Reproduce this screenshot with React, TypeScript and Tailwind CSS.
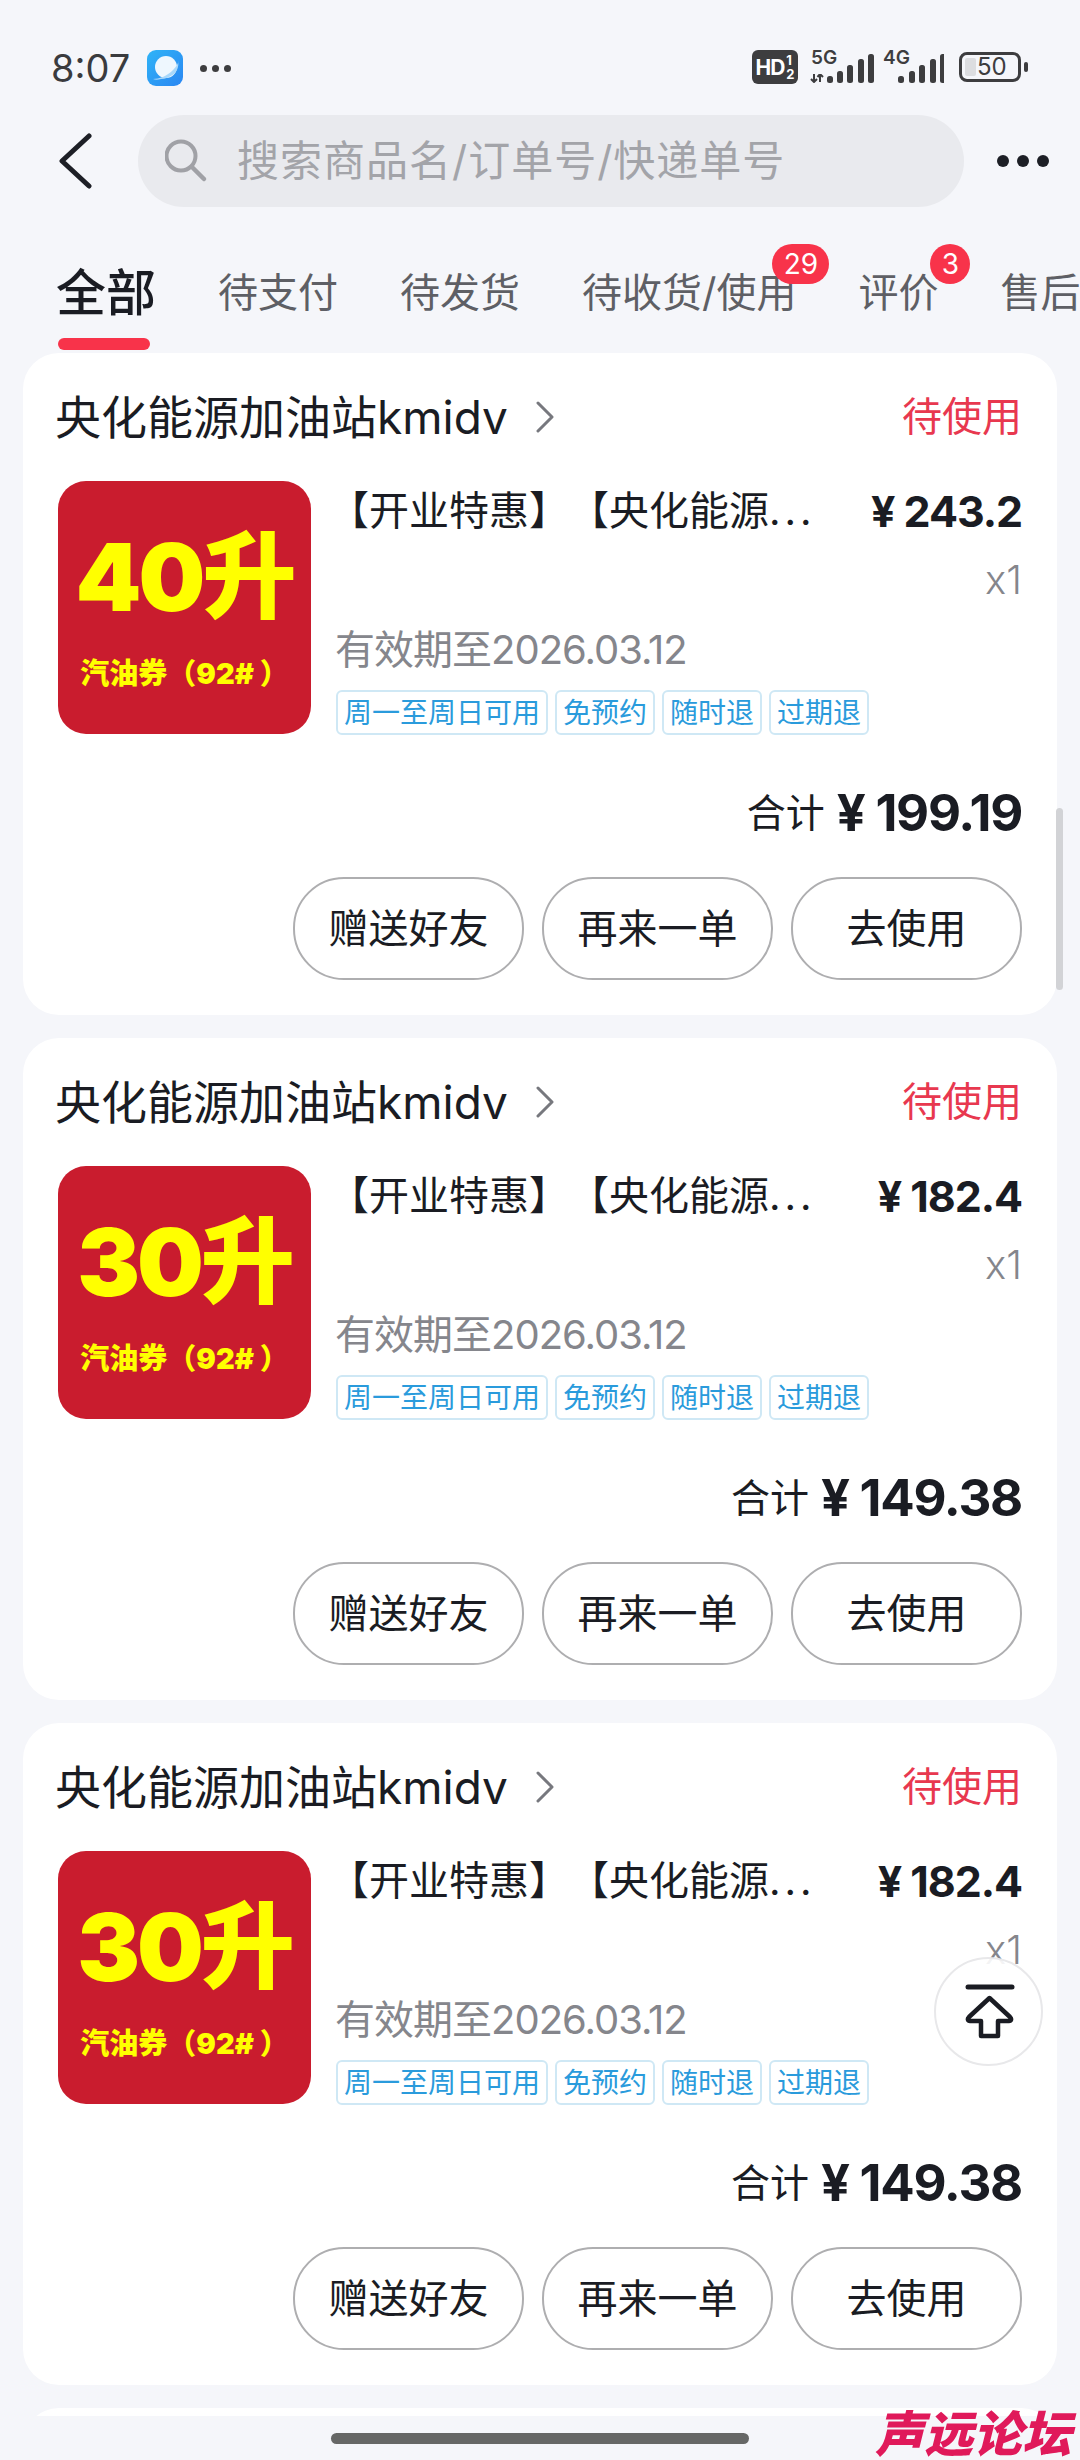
const font = { fontFamily: '"Inter", "Noto Sans CJK SC", sans-serif' }

const tabs = [
  { name: "全部", active: true },
  { name: "待支付" },
  { name: "待发货" },
  { name: "待收货/使用", badge: "29" },
  { name: "评价", badge: "3" },
  { name: "售后" },
]

const orders = [
  { liters: "40升", price: "243.2", total: "199.19" },
  { liters: "30升", price: "182.4", total: "149.38" },
  { liters: "30升", price: "182.4", total: "149.38" },
]

const tags = ["周一至周日可用", "免预约", "随时退", "过期退"]
const actions = ["赠送好友", "再来一单", "去使用"]

function Signal({ bars }: { bars: { x: number; top: number }[] }) {
  return (
    <svg width="50" height="31" viewBox="0 0 50 31" className="block">
      {bars.map((b) => (
        <rect key={b.x} x={b.x} y={b.top} width="6" height={30 - b.top} rx="2.5" fill="#3d3d3f" />
      ))}
    </svg>
  )
}

function StatusBar() {
  return (
    <div className="flex h-[115px] shrink-0 items-start justify-between pl-[51px] pr-[51px] pt-[50px]">
      <div className="flex h-9 items-center">
        <span className="text-[38px] leading-none text-[#3a3b3e]">8:07</span>
        <svg width="36" height="36" viewBox="0 0 36 36" className="ml-[17px]">
          <defs>
            <linearGradient id="appBlue" x1="0" y1="0" x2="1" y2="1">
              <stop offset="0" stopColor="#2fb4f7" />
              <stop offset="1" stopColor="#2a86f2" />
            </linearGradient>
          </defs>
          <rect width="36" height="36" rx="9" fill="url(#appBlue)" />
          <circle cx="19" cy="17" r="11" fill="#eef7fe" />
          <path d="M6 29c6 0 14-3 19-8s7-9 6-10c1 4 0 9-4 13-4 3-9 5-13 5-3 1-6 1-8 0Z" fill="#a8d8fa" />
        </svg>
        <div className="ml-[17px] flex items-center gap-[5px]">
          <span className="size-[7px] rounded-full bg-[#3d3d3f]" />
          <span className="size-[7px] rounded-full bg-[#3d3d3f]" />
          <span className="size-[7px] rounded-full bg-[#3d3d3f]" />
        </div>
      </div>
      <div className="mr-[8px] flex h-9 items-start">
        <div className="flex h-[34px] w-[46px] items-center justify-center gap-[2px] rounded-[6px] bg-[#3d3d3f] text-white">
          <span className="text-[21px] font-bold leading-none tracking-tighter">HD</span>
          <span className="flex flex-col text-[13px] font-bold leading-[14px]">
            <span>1</span>
            <span>2</span>
          </span>
        </div>
        <div className="relative ml-[12px] h-[34px] w-[65px]">
          <span className="absolute left-[1px] top-[-1px] text-[19px] font-semibold leading-[18px] text-[#3d3d3f]">5G</span>
          <svg width="15" height="9" viewBox="0 0 15 9" className="absolute left-0 top-[24px]">
            <path d="M4 0v8M1 5l3 3 3-3M10 8V0M7.500 3 10 0l3 3" stroke="#3d3d3f" strokeWidth="2" fill="none" />
          </svg>
          <div className="absolute left-[14px] top-[3px]">
            <Signal bars={[{ x: 3, top: 23 }, { x: 13, top: 18 }, { x: 23, top: 12 }, { x: 34, top: 6 }, { x: 44, top: 1 }]} />
          </div>
        </div>
        <div className="relative ml-[7px] h-[34px] w-[64px]">
          <span className="absolute left-[1px] top-[-1px] text-[19px] font-semibold leading-[18px] text-[#3d3d3f]">4G</span>
          <div className="absolute left-[12px] top-[3px]">
            <Signal bars={[{ x: 4, top: 23 }, { x: 15, top: 18 }, { x: 25, top: 12 }, { x: 36, top: 6 }, { x: 46, top: 1 }]} />
          </div>
        </div>
        <div className="relative ml-[13px] mt-[2px] h-[30px] w-[62px] rounded-[8px] border-[3px] border-[#3d3d3f]">
          <div className="absolute bottom-[3px] left-[3px] top-[3px] w-[11px] rounded-[2px] bg-[#dcdde0]" />
          <span className="absolute left-[15px] top-0 text-[24px] leading-[24px] text-[#3d3d3f]">50</span>
          <div className="absolute right-[-10px] top-[7px] h-[10px] w-[4px] rounded-full bg-[#3d3d3f]" />
        </div>
      </div>
    </div>
  )
}

function SearchBar() {
  return (
    <div className="flex h-[92px] shrink-0 items-center pl-[58px] pr-[31px]">
      <svg width="34" height="56" viewBox="0 0 34 56" fill="none" className="shrink-0">
        <path d="M31 3 4 28l27 25" stroke="#1d1f26" strokeWidth="5" strokeLinecap="round" strokeLinejoin="round" />
      </svg>
      <div className="ml-[46px] flex h-[92px] w-[826px] items-center rounded-[46px] bg-[#e9eaee] pl-[27px]">
        <svg width="44" height="44" viewBox="0 0 44 44" fill="none" className="shrink-0">
          <circle cx="16" cy="17" r="14.500" stroke="#a0a1a6" strokeWidth="4" />
          <path d="M27 28l12 12" stroke="#a0a1a6" strokeWidth="4.500" strokeLinecap="round" />
        </svg>
        <span className="ml-[28px] text-[42px] leading-none tracking-[1px] text-[#a3a4a9]">搜索商品名/订单号/快递单号</span>
      </div>
      <div className="ml-[33px] flex items-center gap-[8px]">
        <span className="size-[12px] rounded-full bg-[#1d1f26]" />
        <span className="size-[12px] rounded-full bg-[#1d1f26]" />
        <span className="size-[12px] rounded-full bg-[#1d1f26]" />
      </div>
    </div>
  )
}

function Tabs() {
  return (
    <div className="flex h-[146px] shrink-0 gap-[62px] overflow-hidden pl-[56px] pt-[56px]">
      {tabs.map((t) => (
        <div key={t.name} className="relative shrink-0">
          <div className={t.active ? "h-[60px] text-[50px] font-medium leading-[60px] text-[#1a1c23]" : "h-[60px] text-[40px] leading-[60px] text-[#5e5f65]"}>
            {t.name}
          </div>
          {t.active && <div className="ml-[2px] mt-[15px] h-[12px] w-[92px] rounded-full bg-[#f8334a]" />}
          {t.badge && (
            <span
              className={
                t.badge.length > 1
                  ? "absolute right-[-33px] top-[-19px] flex h-[40px] w-[57px] items-center justify-center rounded-full bg-[#f8334a] text-[28px] text-white"
                  : "absolute right-[-32px] top-[-19px] flex size-[40px] items-center justify-center rounded-full bg-[#f8334a] text-[28px] text-white"
              }
            >
              {t.badge}
            </span>
          )}
        </div>
      ))}
    </div>
  )
}

function OrderCard({ liters, price, total }: { liters: string; price: string; total: string }) {
  return (
    <div className="h-[662px] shrink-0 rounded-[36px] bg-white px-[35px] pt-[34px]">
      <div className="flex h-[60px] items-center justify-between">
        <div className="flex items-center">
          <span className="ml-[-3px] text-[46px] leading-[60px] text-[#1a1c23]">央化能源加油站kmidv</span>
          <svg width="20" height="32" viewBox="0 0 20 32" fill="none" className="ml-[27px]">
            <path d="M3 2l14 14L3 30" stroke="#77787e" strokeWidth="3" strokeLinecap="round" strokeLinejoin="round" />
          </svg>
        </div>
        <span className="text-[40px] text-[#e8384f]">待使用</span>
      </div>
      <div className="mt-[34px] flex">
        <div className="flex size-[253px] shrink-0 flex-col items-center rounded-[28px] bg-[#c91c2e] text-[#ffff00]">
          <span className="mt-[41px] h-[110px] text-[94px] font-black leading-[110px] tracking-[-3px]">{liters}</span>
          <span className="mt-[25px] text-[29px] font-black leading-[34px]">汽油券（92# ）</span>
        </div>
        <div className="ml-[24px] flex min-w-0 flex-1 flex-col">
          <div className="mt-[4px] flex h-[52px] justify-between">
            <span className="ml-[-6px] text-[40px] leading-[52px] text-[#1a1c23] [text-spacing-trim:space-all]">
              【开业特惠】【央化能源<span className="tracking-[4px]">...</span>
            </span>
            <span className="text-[43px] font-bold leading-[52px] tracking-tight text-[#1a1c23]">¥ {price}</span>
          </div>
          <div className="mt-[17px] h-[52px] text-right text-[40px] font-light leading-[52px] text-[#85868c]">x1</div>
          <div className="mt-[20px] h-[48px] text-[40px] leading-[48px] tracking-tight text-[#85868c]">有效期至2026.03.12</div>
          <div className="ml-[1px] mt-[16px] flex gap-[7px]">
            {tags.map((t) => (
              <span key={t} className="flex h-[45px] items-center rounded-[6px] border-2 border-[#cfe8f5] px-[6px] text-[28px] leading-none text-[#2a9bdc]">
                {t}
              </span>
            ))}
          </div>
        </div>
      </div>
      <div className="mt-[52px] flex h-[52px] items-center justify-end">
        <span className="text-[39px] text-[#1a1c23]">合计</span>
        <span className="ml-[12px] text-[51px] font-bold tracking-tight text-[#1a1c23]">¥ {total}</span>
      </div>
      <div className="mt-[38px] flex justify-end gap-[18px]">
        {actions.map((a) => (
          <button key={a} className="h-[103px] w-[231px] rounded-[51px] border-2 border-[#aeaeb0] text-[40px] text-[#1a1c23]">
            {a}
          </button>
        ))}
      </div>
    </div>
  )
}

export default function App() {
  return (
    <div style={font} className="relative flex h-[2460px] w-[1080px] flex-col overflow-hidden bg-[#f5f6fa]">
      <StatusBar />
      <SearchBar />
      <Tabs />
      <div className="flex flex-1 flex-col gap-[23px] overflow-hidden px-[23px]">
        {orders.map((o, i) => (
          <OrderCard key={i} {...o} />
        ))}
        <div className="h-[200px] shrink-0 rounded-[36px] bg-white" />
      </div>
      <div className="flex h-[44px] shrink-0 justify-center pt-[17px]">
        <div className="h-[11px] w-[418px] rounded-full bg-[#666766]" />
      </div>

      {/* floating bits over the list */}
      <div className="absolute right-[17px] top-[808px] h-[182px] w-[7px] rounded-full bg-[#d2d3d6]" />
      <div className="absolute left-[934px] top-[1957px] flex size-[109px] items-center justify-center rounded-full border-2 border-[#e8e8ea] bg-white/90">
        <svg width="52" height="56" viewBox="0 0 52 56" fill="none">
          <path d="M5 3h44" stroke="#1a1c23" strokeWidth="5" strokeLinecap="round" />
          <path d="M26.500 14 6 33c-2 2-1 4 1 4h11v15h17V37h11c2 0 3-2 1-4L26.500 14Z" stroke="#1a1c23" strokeWidth="4.500" strokeLinejoin="round" />
        </svg>
      </div>
      <span className="absolute left-[875px] top-[2410px] text-[49px] font-black italic leading-[50px] text-[#e0195a]">声远论坛</span>
    </div>
  )
}
